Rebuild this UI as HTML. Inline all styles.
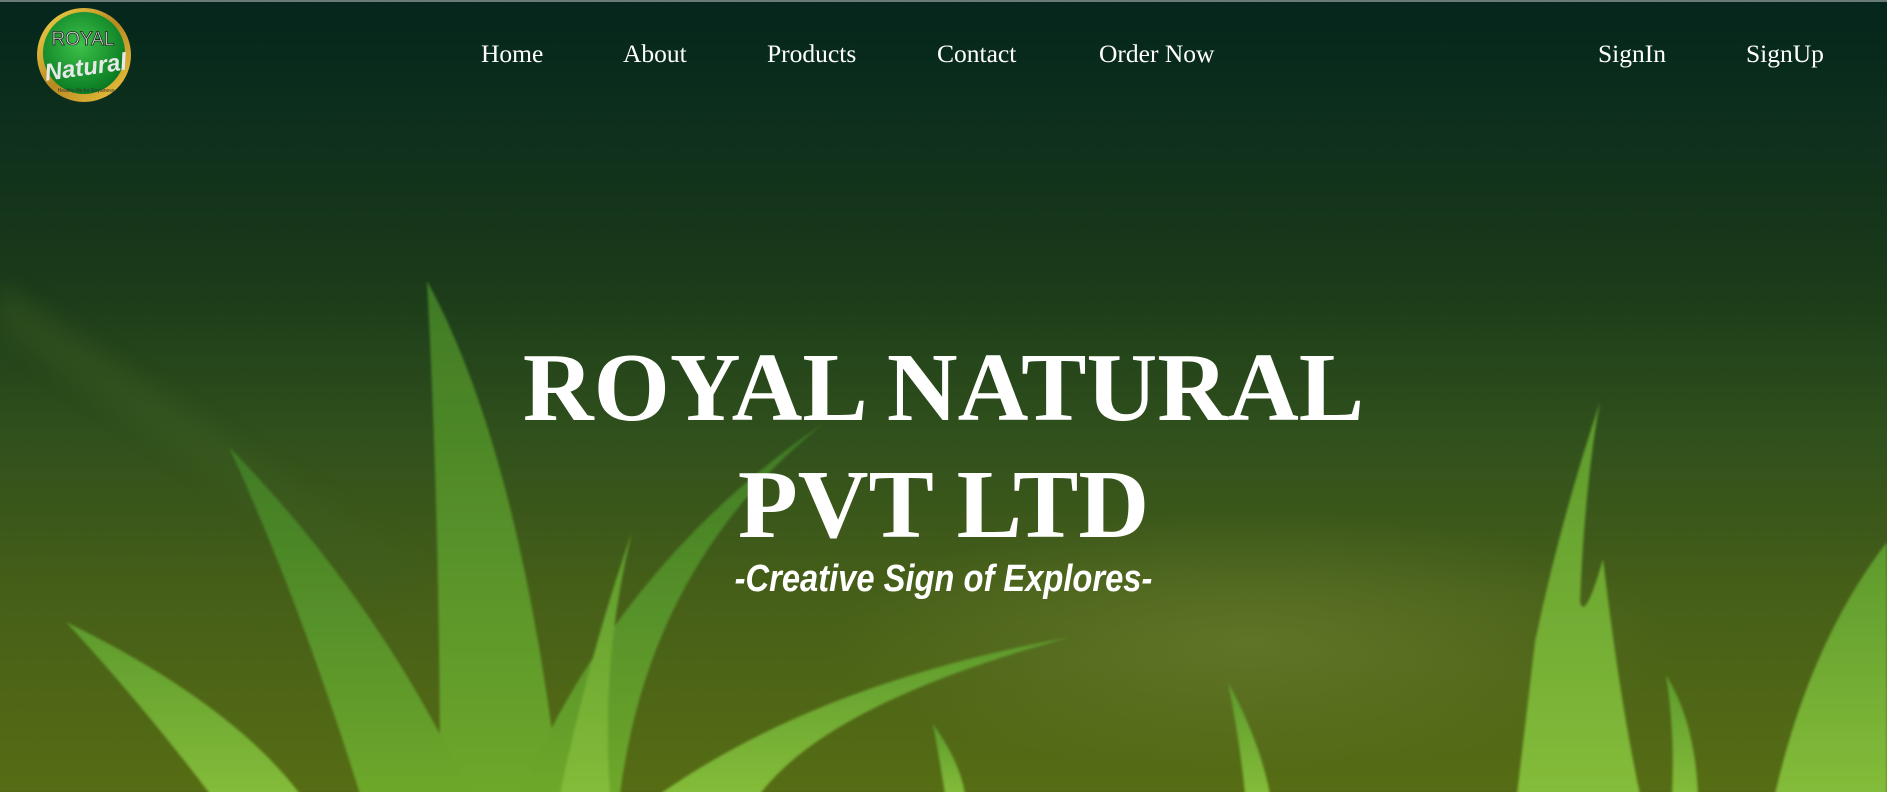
<!DOCTYPE html>
<html><head><meta charset="utf-8"><style>
*{margin:0;padding:0;box-sizing:border-box}
html,body{width:1887px;height:792px;overflow:hidden}
body{position:relative;background:linear-gradient(180deg,#04261c 0%,#0d2f1c 15%,#1a3a1a 35%,#30501c 55%,#465f18 75%,#566c14 100%);font-family:"Liberation Serif",serif;border-top:2px solid #6a7a78}
svg.bg{position:absolute;left:0;top:0}
.nav a{position:absolute;top:37px;color:#fff;font-size:25.5px;text-decoration:none;white-space:nowrap}
h1{position:absolute;left:0;width:1887px;text-align:center;color:#fff;font-weight:bold;font-size:98px;line-height:117px;top:328px;letter-spacing:0px}
.sub{position:absolute;left:0;width:1887px;text-align:center;top:556px;color:#fff;font-family:"Liberation Sans Narrow","Liberation Sans",sans-serif;font-weight:bold;font-style:italic;font-size:38px;transform:scaleX(0.86)}
</style></head><body>
<svg class="bg" width="1887" height="792" viewBox="0 0 1887 792">
<defs>
<linearGradient id="lf" x1="0" y1="0" x2="0" y2="1"><stop offset="0" stop-color="#3f7a26"/><stop offset="1" stop-color="#6ea82c"/></linearGradient>
<linearGradient id="lf2" x1="0" y1="0" x2="0" y2="1"><stop offset="0" stop-color="#5d9a2c"/><stop offset="1" stop-color="#84bc3a"/></linearGradient>
<radialGradient id="haze" cx="0.5" cy="0.5" r="0.5"><stop offset="0" stop-color="#7a8a3a" stop-opacity="0.45"/><stop offset="1" stop-color="#7a8a3a" stop-opacity="0"/></radialGradient>
<filter id="b"><feGaussianBlur stdDeviation="1.2"/></filter>
<filter id="b2"><feGaussianBlur stdDeviation="10"/></filter>
</defs>
<ellipse cx="1250" cy="640" rx="420" ry="130" fill="url(#haze)"/>
<path d="M0 280 Q200 420 420 560 L380 600 Q180 450 0 330Z" fill="#3d5e22" opacity="0.35" filter="url(#b2)"/>
<g filter="url(#b)">
<path d="M427 279 Q520 450 560 792 L440 792 Q440 520 427 279Z" fill="url(#lf)"/>
<path d="M229 445 Q380 600 470 792 L360 792 Q300 600 229 445Z" fill="url(#lf)"/>
<path d="M66 620 Q230 700 300 792 L210 792 Q140 700 66 620Z" fill="url(#lf2)"/>
<path d="M824 421 Q650 560 620 792 L520 792 Q620 560 824 421Z" fill="url(#lf)"/>
<path d="M632 530 Q600 660 610 792 L560 792 Q590 650 632 530Z" fill="url(#lf2)"/>
<path d="M1071 635 Q830 700 760 792 L660 792 Q820 680 1071 635Z" fill="url(#lf2)"/>
<path d="M933 722 Q960 760 965 792 L945 792 Q940 760 933 722Z" fill="url(#lf2)"/>
<path d="M1228 680 Q1260 740 1270 792 L1245 792 Q1240 740 1228 680Z" fill="url(#lf2)"/>
<path d="M1600 400 Q1560 520 1535 640 L1517 792 L1640 792 Q1620 700 1603 557 Q1585 620 1580 600 Q1585 480 1600 400Z" fill="url(#lf2)"/>
<path d="M1666 673 Q1695 720 1698 792 L1672 792 Q1675 730 1666 673Z" fill="url(#lf2)"/>
<path d="M1887 540 Q1810 640 1775 792 L1887 792Z" fill="url(#lf2)"/>
</g>
</svg>
<svg style="position:absolute;left:34px;top:3px" width="100" height="100" viewBox="0 0 100 100">
<defs><radialGradient id="g" cx="0.45" cy="0.4" r="0.6"><stop offset="0" stop-color="#3cc24a"/><stop offset="1" stop-color="#0a7a22"/></radialGradient>
<linearGradient id="gold" x1="0" y1="0" x2="1" y2="1"><stop offset="0" stop-color="#f5d74a"/><stop offset="0.5" stop-color="#b88a22"/><stop offset="1" stop-color="#f0c840"/></linearGradient></defs>
<circle cx="50" cy="50" r="47" fill="url(#gold)"/>
<circle cx="50" cy="48" r="41" fill="url(#g)"/>
<text x="49" y="40" text-anchor="middle" font-family="Liberation Sans,sans-serif" font-size="19" fill="#eee" stroke="#222" stroke-width="0.8">ROYAL</text>
<text x="52" y="70" text-anchor="middle" font-family="Liberation Sans,sans-serif" font-style="italic" font-weight="bold" font-size="24" fill="#e8e8e8" transform="rotate(-8 52 64)">Natural</text>
<text x="52" y="87" text-anchor="middle" font-family="Liberation Sans,sans-serif" font-size="5" fill="#333">Healthy life for Royalness</text>
</svg>
<div class="nav">
<a style="left:481px">Home</a>
<a style="left:623px">About</a>
<a style="left:767px">Products</a>
<a style="left:937px">Contact</a>
<a style="left:1099px">Order Now</a>
<a style="left:1598px">SignIn</a>
<a style="left:1746px">SignUp</a>
</div>
<h1>ROYAL NATURAL<br>PVT LTD</h1>
<div class="sub">-Creative Sign of Explores-</div>
</body></html>
